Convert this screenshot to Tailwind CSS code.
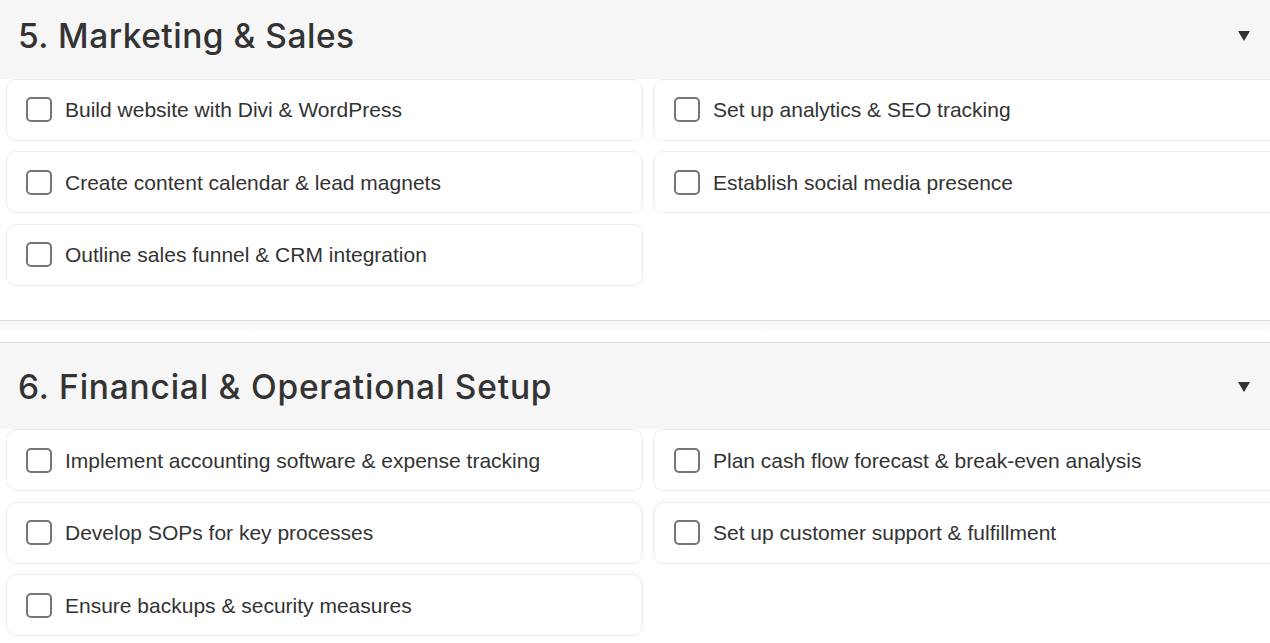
<!DOCTYPE html>
<html lang="en">
<head>
    <meta charset="UTF-8">
    <title>Checklist</title>
    <script src="https://cdn.jsdelivr.net/npm/@tailwindcss/browser@4"></script>
</head>
<body class="bg-white h-[643px] overflow-hidden font-['Liberation_Sans',sans-serif] text-[#333]">
    <div class="w-[1290px] -mt-[9px]">

        <!-- Section 5 -->
        <section class="h-[330px] border-b border-[#dcdcdc]">
            <div class="w-[1270px] h-[87.9px] bg-[#f6f6f6] flex items-center justify-between pl-[18px] pr-5 pt-[2px]">
                <h2 class="font-['Inter',sans-serif] font-medium text-[33.5px] tracking-[0.5px]">5. Marketing &amp; Sales</h2>
                <svg class="w-3 h-[10px]" viewBox="0 0 12 10"><polygon points="0,0 12,0 6,10" fill="#333"/></svg>
            </div>
            <div class="grid grid-cols-[637px_637px] gap-x-[10px] gap-y-[10.5px] pl-[6px]">
                <label class="h-[62px] flex items-center gap-[13px] pl-[19px] bg-white border border-[#ececec] rounded-[10px] text-[21px]"><span class="w-[26px] h-[25px] border-2 border-[#767676] rounded-[5px]"></span>Build website with Divi &amp; WordPress</label>
                <label class="h-[62px] flex items-center gap-[13px] pl-5 bg-white border border-[#ececec] rounded-[10px] text-[21px]"><span class="w-[26px] h-[25px] border-2 border-[#767676] rounded-[5px]"></span>Set up analytics &amp; SEO tracking</label>
                <label class="h-[62px] flex items-center gap-[13px] pl-[19px] bg-white border border-[#ececec] rounded-[10px] text-[21px]"><span class="w-[26px] h-[25px] border-2 border-[#767676] rounded-[5px]"></span>Create content calendar &amp; lead magnets</label>
                <label class="h-[62px] flex items-center gap-[13px] pl-5 bg-white border border-[#ececec] rounded-[10px] text-[21px]"><span class="w-[26px] h-[25px] border-2 border-[#767676] rounded-[5px]"></span>Establish social media presence</label>
                <label class="h-[62px] flex items-center gap-[13px] pl-[19px] bg-white border border-[#ececec] rounded-[10px] text-[21px]"><span class="w-[26px] h-[25px] border-2 border-[#767676] rounded-[5px]"></span>Outline sales funnel &amp; CRM integration</label>
            </div>
        </section>

        <!-- Gap between sections -->
        <div class="w-[1270px] h-[21px] bg-linear-to-b from-[#f6f6f6] to-white to-50%"></div>

        <!-- Section 6 -->
        <section>
            <div class="w-[1270px] h-[87.4px] bg-[#f6f6f6] border-t border-[#dcdcdc] flex items-center justify-between pl-[18px] pr-5 pt-[1px]">
                <h2 class="font-['Inter',sans-serif] font-medium text-[33.5px] tracking-[0.78px]">6. Financial &amp; Operational Setup</h2>
                <svg class="w-3 h-[10px]" viewBox="0 0 12 10"><polygon points="0,0 12,0 6,10" fill="#333"/></svg>
            </div>
            <div class="grid grid-cols-[637px_637px] gap-x-[10px] gap-y-[10.5px] pl-[6px]">
                <label class="h-[62px] flex items-center gap-[13px] pl-[19px] bg-white border border-[#ececec] rounded-[10px] text-[21px]"><span class="w-[26px] h-[25px] border-2 border-[#767676] rounded-[5px]"></span>Implement accounting software &amp; expense tracking</label>
                <label class="h-[62px] flex items-center gap-[13px] pl-5 bg-white border border-[#ececec] rounded-[10px] text-[21px]"><span class="w-[26px] h-[25px] border-2 border-[#767676] rounded-[5px]"></span>Plan cash flow forecast &amp; break-even analysis</label>
                <label class="h-[62px] flex items-center gap-[13px] pl-[19px] bg-white border border-[#ececec] rounded-[10px] text-[21px]"><span class="w-[26px] h-[25px] border-2 border-[#767676] rounded-[5px]"></span>Develop SOPs for key processes</label>
                <label class="h-[62px] flex items-center gap-[13px] pl-5 bg-white border border-[#ececec] rounded-[10px] text-[21px]"><span class="w-[26px] h-[25px] border-2 border-[#767676] rounded-[5px]"></span>Set up customer support &amp; fulfillment</label>
                <label class="h-[62px] flex items-center gap-[13px] pl-[19px] bg-white border border-[#ececec] rounded-[10px] text-[21px]"><span class="w-[26px] h-[25px] border-2 border-[#767676] rounded-[5px]"></span>Ensure backups &amp; security measures</label>
            </div>
        </section>

    </div>
</body>
</html>
